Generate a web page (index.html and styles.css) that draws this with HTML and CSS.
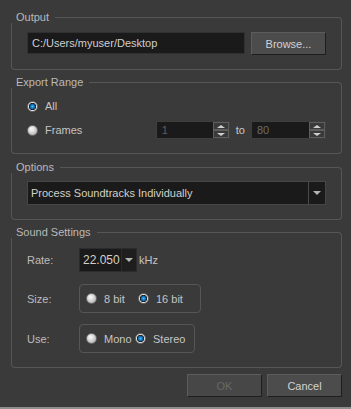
FILE: index.html
```html
<!DOCTYPE html>
<html lang="en">
<head>
    <meta charset="UTF-8">
    <title>Export Sound</title>
    <link rel="stylesheet" href="styles.css">
</head>
<body>
    <div class="dialog">
        <section class="group">
            <div class="group-head"><span class="group-title">Output</span><span class="group-line"></span></div>
            <div class="group-body body-output">
                <div class="row">
                    <div class="field path">C:/Users/myuser/Desktop</div>
                    <button class="btn browse">Browse...</button>
                </div>
            </div>
        </section>

        <section class="group">
            <div class="group-head"><span class="group-title">Export Range</span><span class="group-line"></span></div>
            <div class="group-body body-range">
                <div class="radio-row">
                    <span class="radio checked"></span><span>All</span>
                </div>
                <div class="radio-row frames">
                    <span class="radio"></span><span class="frames-label">Frames</span>
                    <div class="spin spin-from">
                        <span class="spin-value">1</span>
                        <span class="spin-buttons"><span class="spin-up"></span><span class="spin-down"></span></span>
                    </div>
                    <span class="to">to</span>
                    <div class="spin spin-to">
                        <span class="spin-value">80</span>
                        <span class="spin-buttons"><span class="spin-up"></span><span class="spin-down"></span></span>
                    </div>
                </div>
            </div>
        </section>

        <section class="group">
            <div class="group-head"><span class="group-title">Options</span><span class="group-line"></span></div>
            <div class="group-body body-options">
                <div class="combo wide">
                    <span class="combo-text">Process Soundtracks Individually</span>
                    <span class="combo-arrow"></span>
                </div>
            </div>
        </section>

        <section class="group">
            <div class="group-head"><span class="group-title">Sound Settings</span><span class="group-line"></span></div>
            <div class="group-body body-sound">
                <div class="setting rate-row">
                    <span class="setting-label">Rate:</span>
                    <div class="combo rate">
                        <span class="combo-text">22.050</span>
                        <span class="combo-arrow"></span>
                    </div>
                    <span class="unit">kHz</span>
                </div>
                <div class="setting size-row">
                    <span class="setting-label">Size:</span>
                    <div class="choice-box size-box">
                        <span class="radio"></span><span class="choice-text">8 bit</span>
                        <span class="radio checked"></span><span class="choice-text">16 bit</span>
                    </div>
                </div>
                <div class="setting use-row">
                    <span class="setting-label">Use:</span>
                    <div class="choice-box use-box">
                        <span class="radio"></span><span class="choice-text">Mono</span>
                        <span class="radio checked"></span><span class="choice-text">Stereo</span>
                    </div>
                </div>
            </div>
        </section>

        <div class="actions">
            <button class="btn" disabled>OK</button>
            <button class="btn">Cancel</button>
        </div>
    </div>
    <div class="window-edge"></div>
</body>
</html>
```

FILE: styles.css
```css
* {
    margin: 0;
    padding: 0;
    box-sizing: border-box;
}

body {
    font-family: "Liberation Sans", Arial, sans-serif;
    font-size: 11px;
    background: #3a3a3a;
    color: #c4c4c4;
    width: 351px;
    height: 409px;
    overflow: hidden;
    display: flex;
    flex-direction: column;
}

.dialog {
    flex: 1;
    padding: 11px 9px 0 11px;
    display: flex;
    flex-direction: column;
}

.group + .group {
    margin-top: 6px;
}

.group:nth-child(3) {
    margin-top: 7px;
}

/* group box frame: title breaks the top line */
.group-head {
    display: flex;
    height: 12px;
}

.group-title {
    padding: 0 6px 0 5px;
    line-height: 12px;
    color: #b9b9b9;
}

.group-line {
    flex: 1;
    margin-top: 6px;
    border-top: 1px solid #565656;
    border-right: 1px solid #565656;
    border-top-right-radius: 4px;
}

.group-body {
    border: 1px solid #565656;
    border-top: none;
    border-radius: 0 0 4px 4px;
    padding: 9px 15px 14px;
}

.body-options {
    padding-top: 8px;
}

.body-sound {
    padding-top: 10px;
}

.row {
    display: flex;
    align-items: flex-start;
    gap: 6px;
}

.field {
    background: #1a1a1a;
    border: 1px solid #303030;
    color: #cfcfcf;
    height: 22px;
    line-height: 20px;
    padding-left: 4px;
}

.path {
    flex: 1;
}

.btn {
    font-family: inherit;
    font-size: 11px;
    width: 75px;
    height: 23px;
    background: #4c4c4c;
    color: #d2d2d2;
    border: 1px solid #5c5c5c;
    border-right-color: #1e1e1e;
    border-bottom-color: #1e1e1e;
}

.btn:disabled {
    background: #474747;
    color: #686868;
}

/* radio buttons */
.radio-row {
    display: flex;
    align-items: center;
    height: 18px;
}

.radio-row + .radio-row {
    margin-top: 6px;
}

.radio {
    width: 11px;
    height: 11px;
    border-radius: 50%;
    border: 1px solid #6e6e6e;
    background: radial-gradient(circle at 40% 35%, #fafafa 0, #d4d4d4 45%, #9a9a9a 100%);
    margin-right: 7px;
    flex-shrink: 0;
}

.radio.checked {
    background: radial-gradient(circle at 50% 50%, #5ab8f0 0, #1482cc 1.5px, #0b5a92 2.6px, #1a1a1a 3.2px, #1a1a1a 3.4px, #e8e8e8 3.9px, #a8a8a8 100%);
}

.frames-label {
    flex: 1;
}

.spin {
    display: flex;
    height: 18px;
    background: #1a1a1a;
    border: 1px solid #3e3e3e;
}

.spin-from {
    width: 74px;
}

.spin-to {
    width: 75px;
}

.spin-value {
    flex: 1;
    line-height: 16px;
    padding-left: 5px;
    color: #5e5e5e;
}

.spin-to .spin-value {
    color: #6c6c6c;
}

.spin-buttons {
    width: 16px;
    display: flex;
    flex-direction: column;
}

.spin-up,
.spin-down {
    flex: 1;
    background: #3a3a3a;
    border: 1px solid #5e5e5e;
    display: flex;
    align-items: center;
    justify-content: center;
}

.spin-up::after {
    content: "";
    border-left: 4px solid transparent;
    border-right: 4px solid transparent;
    border-bottom: 3px solid #cfcfcf;
}

.spin-down::after {
    content: "";
    border-left: 4px solid transparent;
    border-right: 4px solid transparent;
    border-top: 3px solid #cfcfcf;
}

.to {
    margin: 0 6px;
    color: #c8c8c8;
}

/* combo boxes */
.combo {
    display: flex;
    height: 24px;
    background: #1a1a1a;
    border: 1px solid #464646;
}

.combo-text {
    flex: 1;
    line-height: 22px;
    padding-left: 3px;
    color: #d4d0c6;
}

.combo-arrow {
    width: 17px;
    border-left: 1px solid #4a4a4a;
    display: flex;
    align-items: center;
    justify-content: center;
}

.combo-arrow::after {
    content: "";
    border-left: 4px solid transparent;
    border-right: 4px solid transparent;
    border-top: 4px solid #b4b4b4;
}

/* sound settings */
.setting {
    display: flex;
    align-items: center;
}

.setting-label {
    width: 52px;
    color: #bdbdbd;
}

.combo.rate {
    width: 58px;
    border-color: #2c2c2c;
}

.combo.rate .combo-text {
    padding-left: 3px;
    font-size: 12px;
}

.combo.rate .combo-arrow {
    width: 15px;
    background: #1e1e1e;
    border-left-color: #2c2c2c;
}

.unit {
    margin-left: 2px;
}

.size-row {
    margin-top: 12px;
}

.use-row {
    margin-top: 11px;
}

.choice-box {
    display: flex;
    align-items: center;
    height: 29px;
    border: 1px solid #565656;
    border-radius: 4px;
    padding: 0 0 0 6px;
}

.size-box {
    width: 122px;
}

.use-box {
    width: 116px;
}

.size-box .choice-text:nth-child(2) {
    width: 34px;
}

.use-box .choice-text:nth-child(2) {
    width: 31px;
}

.actions {
    display: flex;
    justify-content: flex-end;
    gap: 5px;
    margin-top: 6px;
}

.window-edge {
    height: 2px;
    margin-top: 10px;
    background: #8e8e8e;
}
```
